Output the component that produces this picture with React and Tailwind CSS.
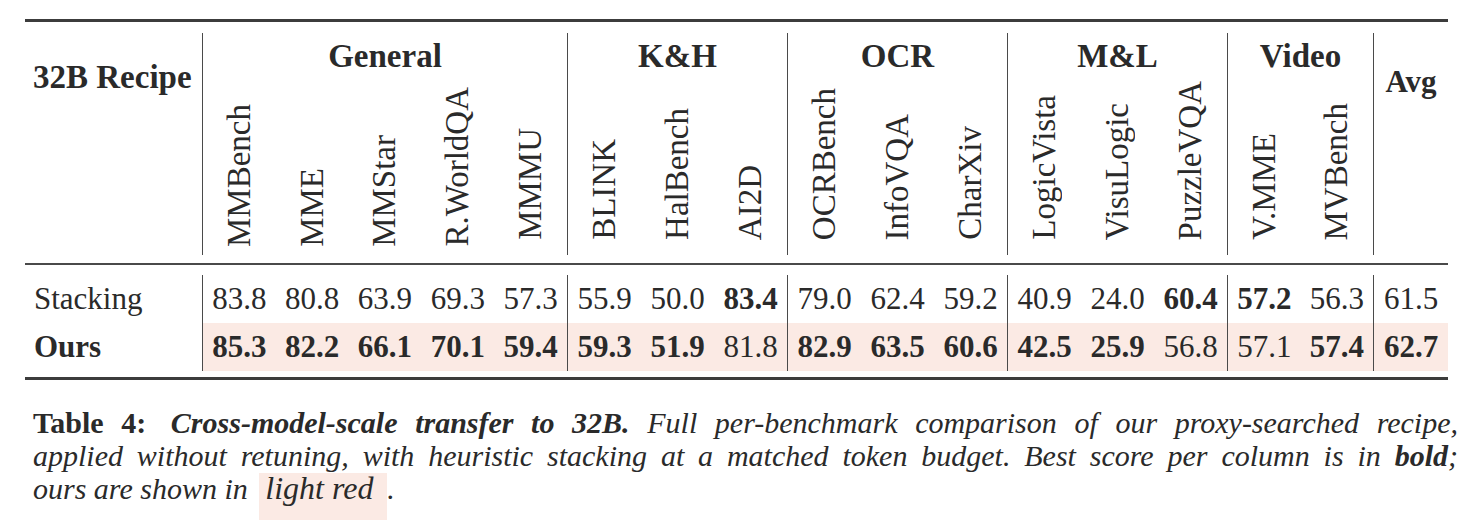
import React from "react";

const groups = [
  { name: "General", w: "w-[365px]", cols: ["MMBench", "MME", "MMStar", "R.WorldQA", "MMMU"] },
  { name: "K&H", w: "w-[220px]", cols: ["BLINK", "HalBench", "AI2D"] },
  { name: "OCR", w: "w-[220px]", cols: ["OCRBench", "InfoVQA", "CharXiv"] },
  { name: "M&L", w: "w-[220px]", cols: ["LogicVista", "VisuLogic", "PuzzleVQA"] },
  { name: "Video", w: "w-[146px]", cols: ["V.MME", "MVBench"] },
];

// "*" marks the best score in the column
const rows = [
  {
    label: "Stacking",
    bold: false,
    vals: [
      ["83.8", "80.8", "63.9", "69.3", "57.3"],
      ["55.9", "50.0", "*83.4"],
      ["79.0", "62.4", "59.2"],
      ["40.9", "24.0", "*60.4"],
      ["*57.2", "56.3"],
    ],
    avg: "61.5",
  },
  {
    label: "Ours",
    bold: true,
    vals: [
      ["*85.3", "*82.2", "*66.1", "*70.1", "*59.4"],
      ["*59.3", "*51.9", "81.8"],
      ["*82.9", "*63.5", "*60.6"],
      ["*42.5", "*25.9", "56.8"],
      ["57.1", "*57.4"],
    ],
    avg: "*62.7",
  },
];

function Cell({ v }) {
  const best = v.startsWith("*");
  return (
    <div className={`flex-1 text-center ${best ? "font-bold" : ""}`}>
      {best ? v.slice(1) : v}
    </div>
  );
}

function Rotated({ text, first }) {
  return (
    <div className={`flex-1 flex justify-center ${first ? "pb-[8px]" : "pb-[15px]"}`}>
      <span className="[writing-mode:vertical-rl] rotate-180 text-[33px] leading-[37px] whitespace-nowrap">
        {text}
      </span>
    </div>
  );
}

export default function App() {
  return (
    <div className="bg-white min-h-[528px] w-[1478px] [font-family:Liberation_Serif,Times_New_Roman,serif] text-[#2a2a2a] pt-[19px]">
      <div className="ml-[25px] w-[1423px]">
        {/* top rule */}
        <div className="h-[3px] bg-[#3c3c3c]" />

        {/* header */}
        <div className="flex h-[222px] mt-[11px]">
          <div className="w-[177px] pl-[8px] pt-[24px] text-[33px] leading-[40px] font-bold">
            32B Recipe
          </div>
          {groups.map((g, gi) => (
            <div key={g.name} className={`${g.w} border-l border-[#4a4a4a] flex flex-col`}>
              <div className="pt-[3px] text-center text-[33px] leading-[40px] font-bold">{g.name}</div>
              <div className="flex-1 flex items-end">
                {g.cols.map((c, ci) => (
                  <Rotated key={c} text={c} first={gi === 0 && ci < 4} />
                ))}
              </div>
            </div>
          ))}
          <div className="w-[75px] border-l border-[#4a4a4a] pt-[29px] text-center text-[31px] leading-[40px] font-bold">
            Avg
          </div>
        </div>

        {/* mid rule */}
        <div className="h-[2px] mt-[8px] bg-[#4a4a4a]" />

        {/* body */}
        <div className="mt-[10px] text-[31px] leading-[48px]">
          {rows.map((r) => (
            <div key={r.label} className="flex h-[48px]">
              <div className={`w-[177px] pl-[9px] ${r.bold ? "font-bold" : ""}`}>{r.label}</div>
              {groups.map((g, gi) => (
                <div
                  key={g.name}
                  className={`${g.w} border-l border-[#4a4a4a] flex ${r.bold ? "bg-[#fbeae4]" : ""}`}
                >
                  {r.vals[gi].map((v, vi) => (
                    <Cell key={vi} v={v} />
                  ))}
                </div>
              ))}
              <div className={`w-[75px] border-l border-[#4a4a4a] flex ${r.bold ? "bg-[#fbeae4]" : ""}`}>
                <Cell v={r.avg} />
              </div>
            </div>
          ))}
        </div>

        {/* bottom rule */}
        <div className="h-[3px] mt-[6px] bg-[#3c3c3c]" />
      </div>

      {/* caption */}
      <div className="ml-[33px] w-[1425px] mt-[26px] text-[30px] leading-[33px]">
        <div className="text-justify [text-align-last:justify]">
          <span className="font-bold mr-[7px]">Table 4:</span>{" "}
          <span className="font-bold italic">Cross-model-scale transfer to 32B.</span>{" "}
          <span className="italic">Full per-benchmark comparison of our proxy-searched recipe,</span>
        </div>
        <div className="text-justify [text-align-last:justify] italic">
          applied without retuning, with heuristic stacking at a matched token budget. Best score per
          column is in <span className="font-bold">bold</span>;
        </div>
        <div className="italic">
          ours are shown in{" "}
          <span className="inline-block w-[128px] ml-[4px] pl-[6px] text-[32px] leading-[30px] pb-[17px] bg-[#fbeae4]">
            light red
          </span>
          .
        </div>
      </div>
    </div>
  );
}
